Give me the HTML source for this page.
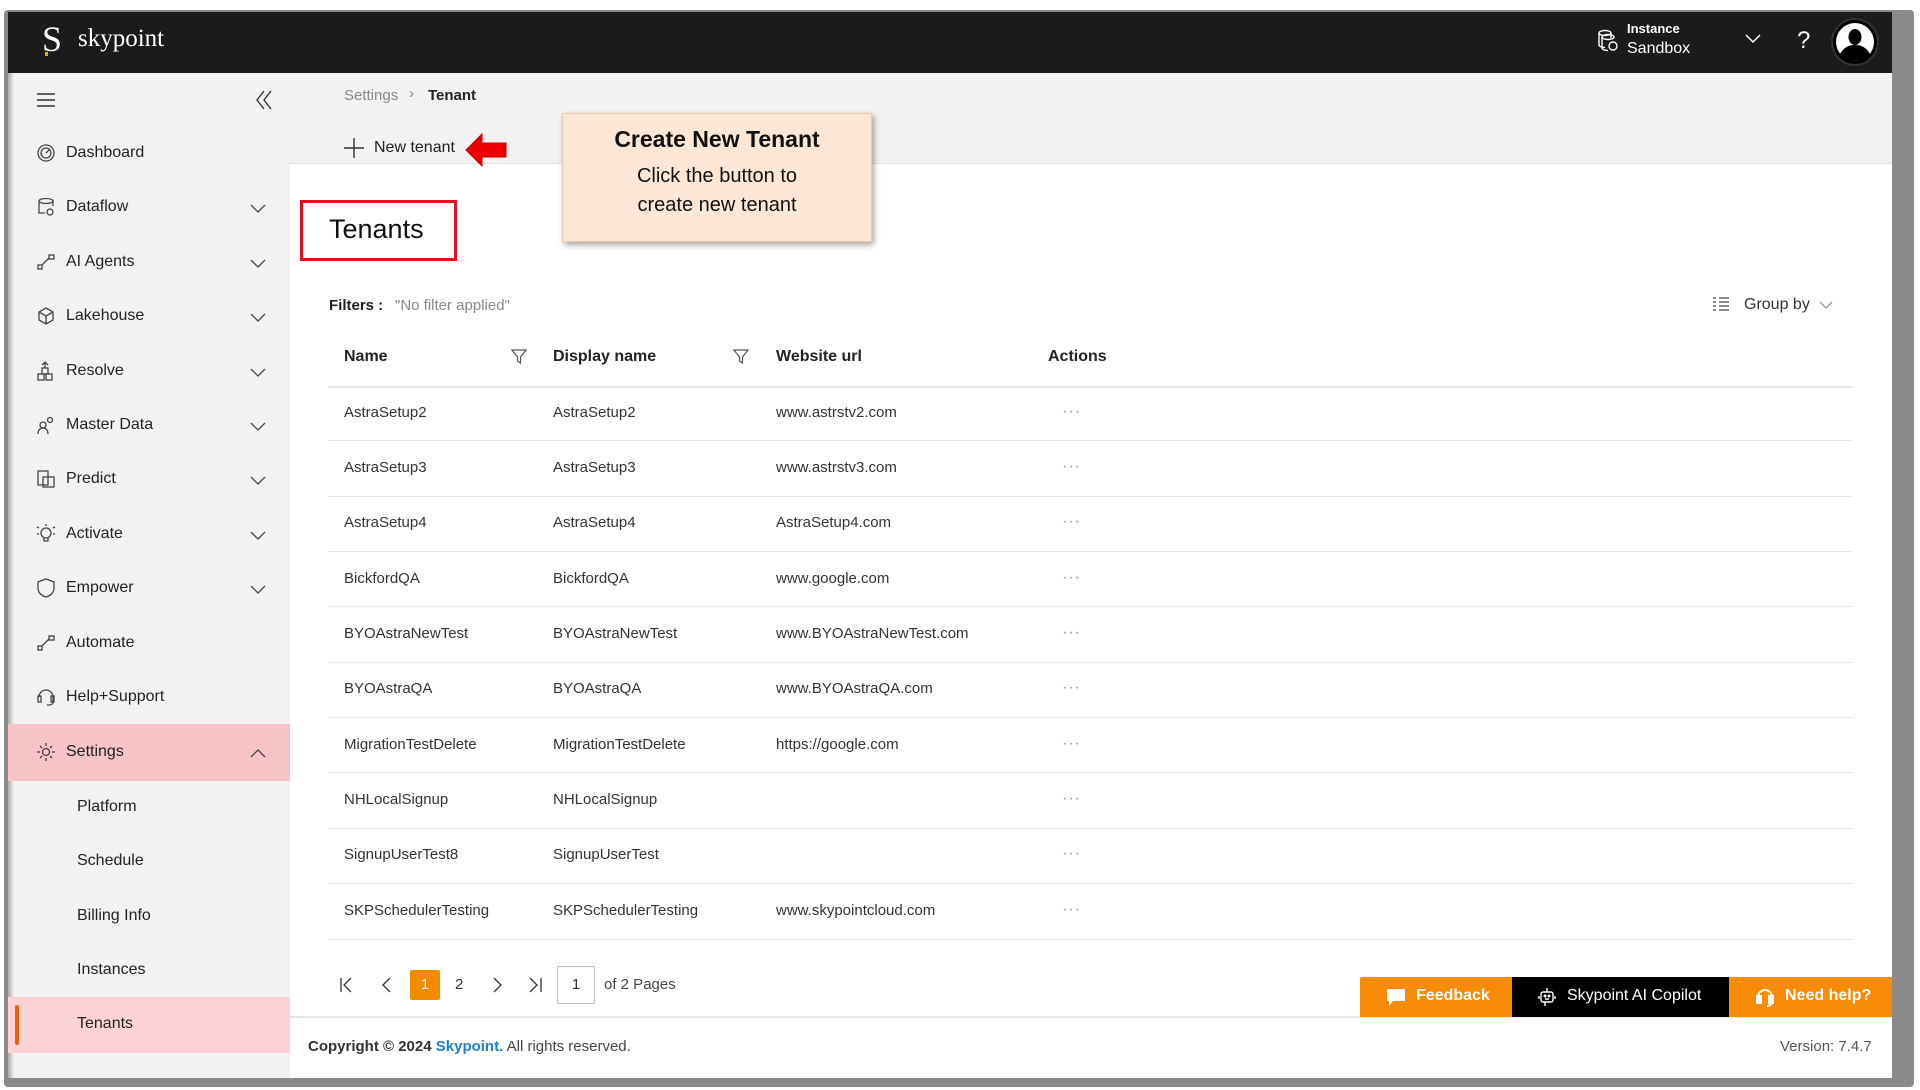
<!DOCTYPE html>
<html><head><meta charset="utf-8"><style>
*{margin:0;padding:0;box-sizing:border-box}
body{width:1920px;height:1090px;position:relative;background:#fff;font-family:"Liberation Sans",sans-serif;color:#252525;overflow:hidden}
.a{position:absolute;white-space:nowrap}
.nav{font-size:16px;color:#222}
.sub{font-size:16px;color:#222}
.cell{font-size:15px;color:#333}
.th{font-size:16px;font-weight:bold;color:#222}
.line{position:absolute;left:328px;width:1525px;height:1px;background:#e8e8e8}
.dots{position:absolute;left:1062px;font-size:16px;color:#999;letter-spacing:1px;line-height:16px}
svg{position:absolute}
.ic{left:36px}
.ic path,.ic circle,.ic rect,.ic ellipse{fill:none;stroke:#444;stroke-width:1.3}
.chev{left:250px}
</style></head><body>
<div class="a" style="left:4px;top:10px;width:1910px;height:1077px;background:#8a8a8a;border-radius:4px"></div>
<div class="a" style="left:8px;top:12px;width:1884px;height:1066px;background:#fff"></div>
<div class="a" style="left:8px;top:12px;width:1884px;height:61px;background:#1b1b1b"></div>
<div class="a" style="left:42px;top:18px;font-family:'Liberation Serif',serif;font-size:36px;color:#fff">S</div>
<div class="a" style="left:45px;top:52px;width:3px;height:4px;background:#f5a500"></div>
<div class="a" style="left:78px;top:25px;font-family:'Liberation Serif',serif;font-size:25px;color:#fff">skypoint</div>
<svg style="left:1597px;top:29px" width="22" height="24" viewBox="0 0 22 24" fill="none" stroke="#fff" stroke-width="1.4"><ellipse cx="8" cy="4" rx="6" ry="2.5"/><path d="M2 4v12c0 1.4 2.7 2.5 6 2.5M14 4v5"/><ellipse cx="11" cy="8" rx="6" ry="2.5"/><path d="M5 8v11c0 1.4 2.7 2.5 6 2.5"/><circle cx="16" cy="17" r="4"/></svg>
<div class="a" style="left:1627px;top:21px;font-size:13px;font-weight:bold;color:#fff">Instance</div>
<div class="a" style="left:1627px;top:40px;font-size:16px;color:#fff">Sandbox</div>
<svg style="left:1745px;top:34px" width="16" height="10" viewBox="0 0 16 10" fill="none" stroke="#fff" stroke-width="1.5"><path d="M1 1l7 7 7-7"/></svg>
<div class="a" style="left:1797px;top:27px;font-size:24px;color:#fff">?</div>
<div class="a" style="left:1831px;top:18px;width:48px;height:48px;border-radius:50%;background:#000;border:2px solid #333"></div>
<svg style="left:1835px;top:22px" width="40" height="40" viewBox="0 0 40 40"><circle cx="20" cy="20" r="19" fill="#fff"/><ellipse cx="20" cy="15" rx="6.5" ry="8" fill="#000"/><path d="M5 32c4-7 9-9 15-9s11 2 15 9c-4 5-9 7-15 7s-11-2-15-7z" fill="#000"/></svg>
<!-- sidebar -->
<div class="a" style="left:8px;top:73px;width:282px;height:1005px;background:#f2f2f2"></div>
<div class="a" style="left:8px;top:73px;width:6px;height:1005px;background:linear-gradient(90deg,#aaa,#f2f2f2)"></div>
<svg style="left:37px;top:93px" width="18" height="14" viewBox="0 0 18 14" stroke="#333" stroke-width="1.4"><path d="M0 1h18M0 7h18M0 13h18"/></svg>
<svg style="left:254px;top:90px" width="20" height="20" viewBox="0 0 20 20" fill="none" stroke="#333" stroke-width="1.4"><path d="M10 1L3 10l7 9M17 1l-7 9 7 9"/></svg>
<div class="a" style="left:8px;top:724px;width:282px;height:57px;background:#f4c4c6"></div>
<div class="a" style="left:8px;top:997px;width:282px;height:56px;background:#fdd2d4"></div>
<div class="a" style="left:15px;top:1005px;width:4px;height:40px;background:#e8620e;border-radius:2px"></div>

<div class="a nav" style="left:66px;top:144px">Dashboard</div>
<div class="a nav" style="left:66px;top:198px">Dataflow</div>
<div class="a nav" style="left:66px;top:253px">AI Agents</div>
<div class="a nav" style="left:66px;top:307px">Lakehouse</div>
<div class="a nav" style="left:66px;top:362px">Resolve</div>
<div class="a nav" style="left:66px;top:416px">Master Data</div>
<div class="a nav" style="left:66px;top:470px">Predict</div>
<div class="a nav" style="left:66px;top:525px">Activate</div>
<div class="a nav" style="left:66px;top:579px">Empower</div>
<div class="a nav" style="left:66px;top:634px">Automate</div>
<div class="a nav" style="left:66px;top:688px">Help+Support</div>
<div class="a nav" style="left:66px;top:743px">Settings</div>
<div class="a sub" style="left:77px;top:798px">Platform</div>
<div class="a sub" style="left:77px;top:852px">Schedule</div>
<div class="a sub" style="left:77px;top:907px">Billing Info</div>
<div class="a sub" style="left:77px;top:961px">Instances</div>
<div class="a sub" style="left:77px;top:1015px">Tenants</div>

<svg class="ic" style="top:143px" width="20" height="20" viewBox="0 0 20 20"><circle cx="10" cy="10" r="8"/><circle cx="10" cy="10" r="5"/><path d="M10 10l3-3"/></svg>
<svg class="ic" style="top:197px" width="20" height="20" viewBox="0 0 20 20"><path d="M3 4v12h6M17 4v5"/><ellipse cx="10" cy="4" rx="7" ry="2.5"/><circle cx="14" cy="15" r="3"/></svg>
<svg class="ic" style="top:252px" width="20" height="20" viewBox="0 0 20 20"><rect x="2" y="13" width="4" height="4"/><path d="M6 13l7-7"/><rect x="13" y="3" width="5" height="4"/></svg>
<svg class="ic" style="top:306px" width="20" height="20" viewBox="0 0 20 20"><path d="M10 2l7 4v8l-7 4-7-4V6zM3 6l7 4 7-4M10 10v8"/></svg>
<svg class="ic" style="top:361px" width="20" height="20" viewBox="0 0 20 20"><rect x="2" y="13" width="6" height="6"/><rect x="10" y="13" width="6" height="6"/><rect x="6" y="7" width="6" height="6"/><path d="M9 7V1M6 4l3-3 3 3"/></svg>
<svg class="ic" style="top:415px" width="20" height="20" viewBox="0 0 20 20"><circle cx="7" cy="10" r="3"/><path d="M2 19c0-4 2-6 5-6s5 2 5 6"/><circle cx="14" cy="5" r="2.5"/></svg>
<svg class="ic" style="top:469px" width="20" height="20" viewBox="0 0 20 20"><rect x="2" y="2" width="10" height="14"/><rect x="7" y="8" width="11" height="10"/></svg>
<svg class="ic" style="top:524px" width="20" height="20" viewBox="0 0 20 20"><circle cx="10" cy="9" r="5"/><path d="M8 14v3h4v-3M10 0v2M3 4l-2-1M17 4l2-1M3 10H1M17 10h2"/></svg>
<svg class="ic" style="top:578px" width="20" height="20" viewBox="0 0 20 20"><path d="M10 1l8 3v6c0 5-4 8-8 9-4-1-8-4-8-9V4z"/></svg>
<svg class="ic" style="top:633px" width="20" height="20" viewBox="0 0 20 20"><rect x="2" y="13" width="4" height="4"/><path d="M6 13l7-7"/><rect x="13" y="3" width="5" height="4"/></svg>
<svg class="ic" style="top:687px" width="20" height="20" viewBox="0 0 20 20"><path d="M3 10a7 7 0 0 1 14 0v5c0 2-2 3-4 3h-2"/><rect x="2" y="9" width="3" height="6"/><rect x="15" y="9" width="3" height="6"/></svg>
<svg class="ic" style="top:742px" width="20" height="20" viewBox="0 0 20 20"><circle cx="10" cy="10" r="3.5"/><path d="M10 1v3M10 16v3M1 10h3M16 10h3M4 4l2 2M14 14l2 2M4 16l2-2M14 6l2-2"/></svg>

<svg class="chev" style="top:204px" width="16" height="10" viewBox="0 0 16 10" fill="none" stroke="#444" stroke-width="1.3"><path d="M1 1l7 7 7-7"/></svg>
<svg class="chev" style="top:259px" width="16" height="10" viewBox="0 0 16 10" fill="none" stroke="#444" stroke-width="1.3"><path d="M1 1l7 7 7-7"/></svg>
<svg class="chev" style="top:313px" width="16" height="10" viewBox="0 0 16 10" fill="none" stroke="#444" stroke-width="1.3"><path d="M1 1l7 7 7-7"/></svg>
<svg class="chev" style="top:368px" width="16" height="10" viewBox="0 0 16 10" fill="none" stroke="#444" stroke-width="1.3"><path d="M1 1l7 7 7-7"/></svg>
<svg class="chev" style="top:422px" width="16" height="10" viewBox="0 0 16 10" fill="none" stroke="#444" stroke-width="1.3"><path d="M1 1l7 7 7-7"/></svg>
<svg class="chev" style="top:476px" width="16" height="10" viewBox="0 0 16 10" fill="none" stroke="#444" stroke-width="1.3"><path d="M1 1l7 7 7-7"/></svg>
<svg class="chev" style="top:531px" width="16" height="10" viewBox="0 0 16 10" fill="none" stroke="#444" stroke-width="1.3"><path d="M1 1l7 7 7-7"/></svg>
<svg class="chev" style="top:585px" width="16" height="10" viewBox="0 0 16 10" fill="none" stroke="#444" stroke-width="1.3"><path d="M1 1l7 7 7-7"/></svg>
<svg class="chev" style="top:748px" width="16" height="10" viewBox="0 0 16 10" fill="none" stroke="#444" stroke-width="1.3"><path d="M1 9l7-7 7 7"/></svg>
<!-- main top bar -->
<div class="a" style="left:290px;top:73px;width:1602px;height:91px;background:#f2f2f2;border-bottom:1px solid #e2e2e2"></div>
<div class="a" style="left:344px;top:87px;font-size:15px;color:#888">Settings</div>
<div class="a" style="left:409px;top:85px;font-size:15px;color:#888">›</div>
<div class="a" style="left:428px;top:87px;font-size:15px;color:#222;font-weight:bold">Tenant</div>
<svg style="left:344px;top:138px" width="20" height="20" viewBox="0 0 20 20" stroke="#333" stroke-width="1.4"><path d="M10 0v20M0 10h20"/></svg>
<div class="a" style="left:374px;top:139px;font-size:16px;color:#222">New tenant</div>
<svg style="left:464px;top:132px" width="46" height="36" viewBox="0 0 46 36"><path d="M2 18L18 2v9h24v14H18v9z" fill="#ee0000" stroke="#c00" stroke-width="1"/></svg>
<div class="a" style="left:562px;top:113px;width:310px;height:129px;background:#fce6d6;border:1px solid #f0c9ad;box-shadow:2px 3px 6px rgba(0,0,0,.35)"></div>
<div class="a" style="left:562px;top:126px;width:310px;text-align:center;font-size:23px;font-weight:bold;color:#111">Create New Tenant</div>
<div class="a" style="left:562px;top:162px;width:310px;text-align:center;font-size:20px;color:#111;line-height:29px">Click the button to<br>create new tenant</div>
<div class="a" style="left:300px;top:200px;width:157px;height:61px;border:3px solid #e5101c"></div>
<div class="a" style="left:329px;top:214px;font-size:27px;color:#111">Tenants</div>
<div class="a" style="left:329px;top:297px;font-size:15px;font-weight:bold;color:#222">Filters :</div>
<div class="a" style="left:395px;top:297px;font-size:15px;color:#888">"No filter applied"</div>
<svg style="left:1712px;top:296px" width="18" height="18" viewBox="0 0 18 18" stroke="#444" stroke-width="1.3"><path d="M1 2h3M1 6h3M1 10h3M1 14h3M7 2h10M7 6h10M7 10h10M7 14h10"/></svg>
<div class="a" style="left:1744px;top:296px;font-size:16px;color:#333">Group by</div>
<svg style="left:1819px;top:301px" width="14" height="8" viewBox="0 0 14 8" fill="none" stroke="#888" stroke-width="1.2"><path d="M1 1l6 6 6-6"/></svg>
<div class="a th" style="left:344px;top:348px">Name</div>
<div class="a th" style="left:553px;top:348px">Display name</div>
<div class="a th" style="left:776px;top:348px">Website url</div>
<div class="a th" style="left:1048px;top:348px">Actions</div>
<svg style="left:511px;top:349px" width="16" height="16" viewBox="0 0 16 16" fill="none" stroke="#555" stroke-width="1.2"><path d="M1 1h14l-5.5 7v6l-3-2V8z"/></svg>
<svg style="left:733px;top:349px" width="16" height="16" viewBox="0 0 16 16" fill="none" stroke="#555" stroke-width="1.2"><path d="M1 1h14l-5.5 7v6l-3-2V8z"/></svg>
<div class="line" style="top:386px;height:2px"></div>
<div class="line" style="top:440px"></div><div class="line" style="top:496px"></div><div class="line" style="top:551px"></div><div class="line" style="top:606px"></div><div class="line" style="top:662px"></div><div class="line" style="top:717px"></div><div class="line" style="top:772px"></div><div class="line" style="top:828px"></div><div class="line" style="top:883px"></div><div class="line" style="top:939px"></div>

<div class="a cell" style="left:344px;top:404px">AstraSetup2</div><div class="a cell" style="left:553px;top:404px">AstraSetup2</div><div class="a cell" style="left:776px;top:404px">www.astrstv2.com</div>
<div class="a cell" style="left:344px;top:459px">AstraSetup3</div><div class="a cell" style="left:553px;top:459px">AstraSetup3</div><div class="a cell" style="left:776px;top:459px">www.astrstv3.com</div>
<div class="a cell" style="left:344px;top:514px">AstraSetup4</div><div class="a cell" style="left:553px;top:514px">AstraSetup4</div><div class="a cell" style="left:776px;top:514px">AstraSetup4.com</div>
<div class="a cell" style="left:344px;top:570px">BickfordQA</div><div class="a cell" style="left:553px;top:570px">BickfordQA</div><div class="a cell" style="left:776px;top:570px">www.google.com</div>
<div class="a cell" style="left:344px;top:625px">BYOAstraNewTest</div><div class="a cell" style="left:553px;top:625px">BYOAstraNewTest</div><div class="a cell" style="left:776px;top:625px">www.BYOAstraNewTest.com</div>
<div class="a cell" style="left:344px;top:680px">BYOAstraQA</div><div class="a cell" style="left:553px;top:680px">BYOAstraQA</div><div class="a cell" style="left:776px;top:680px">www.BYOAstraQA.com</div>
<div class="a cell" style="left:344px;top:736px">MigrationTestDelete</div><div class="a cell" style="left:553px;top:736px">MigrationTestDelete</div><div class="a cell" style="left:776px;top:736px">https://google.com</div>
<div class="a cell" style="left:344px;top:791px">NHLocalSignup</div><div class="a cell" style="left:553px;top:791px">NHLocalSignup</div>
<div class="a cell" style="left:344px;top:846px">SignupUserTest8</div><div class="a cell" style="left:553px;top:846px">SignupUserTest</div>
<div class="a cell" style="left:344px;top:902px">SKPSchedulerTesting</div><div class="a cell" style="left:553px;top:902px">SKPSchedulerTesting</div><div class="a cell" style="left:776px;top:902px">www.skypointcloud.com</div>

<div class="dots" style="top:404px">···</div><div class="dots" style="top:459px">···</div><div class="dots" style="top:514px">···</div><div class="dots" style="top:570px">···</div><div class="dots" style="top:625px">···</div><div class="dots" style="top:680px">···</div><div class="dots" style="top:736px">···</div><div class="dots" style="top:791px">···</div><div class="dots" style="top:846px">···</div><div class="dots" style="top:902px">···</div>

<svg style="left:340px;top:977px" width="220" height="16" viewBox="0 0 220 16" fill="none" stroke="#333" stroke-width="1.3"><path d="M1 1v14M11 1L4 8l7 7M50 1l-7 7 7 7M154 1l7 7-7 7M190 1l7 7-7 7M201 1v14"/></svg>
<div class="a" style="left:410px;top:970px;width:30px;height:30px;background:#f28b00;border-radius:2px;color:#fff;font-size:15px;text-align:center;line-height:30px">1</div>
<div class="a" style="left:455px;top:976px;font-size:15px;color:#333">2</div>
<div class="a" style="left:557px;top:966px;width:38px;height:38px;border:1px solid #bbb;border-radius:2px;font-size:15px;text-align:center;line-height:36px;color:#333">1</div>
<div class="a" style="left:604px;top:976px;font-size:15px;color:#444">of 2 Pages</div>
<div class="a" style="left:290px;top:1016px;width:1602px;height:2px;background:#e6e6ea"></div>
<div class="a" style="left:308px;top:1038px;font-size:15px;color:#444"><b style="color:#333">Copyright © 2024 </b><b style="color:#1f7fc8">Skypoint.</b> All rights reserved.</div>
<div class="a" style="left:1780px;top:1038px;font-size:15px;color:#555">Version: 7.4.7</div>
<div class="a" style="left:1360px;top:977px;width:152px;height:40px;background:#f68c06;border-radius:2px 0 0 0"></div>
<svg style="left:1386px;top:988px" width="20" height="20" viewBox="0 0 20 20"><path d="M1 1h18v12H7l-4 5v-5H1z" fill="#fff"/></svg>
<div class="a" style="left:1416px;top:987px;font-size:16px;font-weight:bold;color:#fff">Feedback</div>
<div class="a" style="left:1512px;top:977px;width:217px;height:40px;background:#000"></div>
<svg style="left:1538px;top:987px" width="18" height="20" viewBox="0 0 18 20" fill="none" stroke="#fff" stroke-width="1.4"><path d="M9 1v4"/><rect x="3" y="5" width="12" height="10" rx="2"/><path d="M1 9v3M17 9v3M7 12h4M7 15v4"/><circle cx="7" cy="9" r=".8" fill="#fff"/><circle cx="11" cy="9" r=".8" fill="#fff"/></svg>
<div class="a" style="left:1567px;top:987px;font-size:16px;color:#fff">Skypoint AI Copilot</div>
<div class="a" style="left:1729px;top:977px;width:163px;height:40px;background:#f68c06"></div>
<svg style="left:1756px;top:986px" width="18" height="22" viewBox="0 0 18 22" fill="none" stroke="#fff" stroke-width="2"><path d="M2 11a7 7 0 0 1 14 0v5c0 2-2 4-5 4"/><rect x="1" y="10" width="4" height="7" fill="#fff"/><rect x="13" y="10" width="4" height="7" fill="#fff"/></svg>
<div class="a" style="left:1785px;top:987px;font-size:16px;font-weight:bold;color:#fff">Need help?</div>
</body></html>
